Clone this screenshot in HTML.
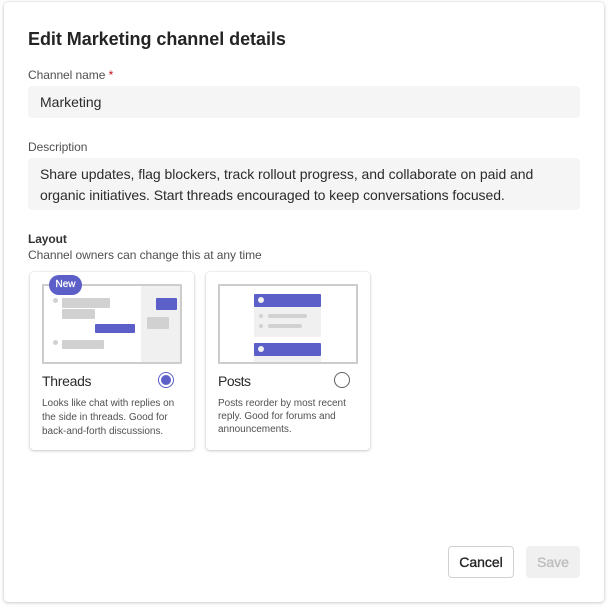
<!DOCTYPE html>
<html><head><meta charset="utf-8"><style>
html,body{margin:0;padding:0;background:#fff;width:608px;height:608px;overflow:hidden}
body{font-family:"Liberation Sans",sans-serif;color:#242424;position:relative}
.a{position:absolute;white-space:nowrap}
.dlg{position:absolute;left:4px;top:2px;width:600px;height:600px;background:#fff;border-radius:4px;box-shadow:0 0 2px rgba(0,0,0,.14),0 1px 4px rgba(0,0,0,.16)}
.inp{position:absolute;left:28px;width:552px;background:#f5f5f5;border-radius:4px}
.lbl{font-size:12px;line-height:16px;color:#505050;letter-spacing:-.06px}
.t{font-size:14px;line-height:20px;color:#2b2b2b}
.card{position:absolute;top:272px;width:164px;height:178px;background:#fff;border-radius:4px;box-shadow:0 0 2px rgba(0,0,0,.12),0 1px 3px rgba(0,0,0,.18)}
.pv{position:absolute;top:284px;width:136px;height:76px;border:2px solid #cccccc;border-radius:1px;background:#fff}
.g{position:absolute;background:#d1d1d1;border-radius:1px}
.b{position:absolute;background:#5b5fc7;border-radius:1px}
.d{position:absolute;border-radius:50%;background:#d1d1d1}
.s{font-size:10px;line-height:14px;color:#505050;letter-spacing:-.02px}
</style></head><body>
<div class="dlg"></div>
<div class="a" style="left:28px;top:28px;font-size:18px;line-height:22px;font-weight:700;color:#242424;letter-spacing:-.04px">Edit Marketing channel details</div>
<div class="a lbl" style="left:28px;top:67px">Channel name <span style="color:#c50f1f">*</span></div>
<div class="inp" style="top:86px;height:32px"></div>
<div class="a t" style="left:40px;top:92px">Marketing</div>
<div class="a lbl" style="left:28px;top:139px">Description</div>
<div class="inp" style="top:158px;height:52px"></div>
<div class="a t" style="left:40px;top:164px;letter-spacing:-.04px">Share updates, flag blockers, track rollout progress, and collaborate on paid and</div>
<div class="a t" style="left:40px;top:185px;letter-spacing:-.07px">organic initiatives. Start threads encouraged to keep conversations focused.</div>
<div class="a" style="left:28px;top:231px;font-size:12px;line-height:16px;font-weight:700;color:#333;letter-spacing:-.1px">Layout</div>
<div class="a lbl" style="left:28px;top:247px">Channel owners can change this at any time</div>

<div class="card" style="left:30px"></div>
<div class="pv" style="left:42px"></div>
<div class="a" style="left:141px;top:286px;width:39px;height:76px;background:#f0f0f0"></div>
<div class="d" style="left:53px;top:298px;width:5px;height:5px"></div>
<div class="g" style="left:62px;top:298px;width:48px;height:10px"></div>
<div class="g" style="left:62px;top:309px;width:33px;height:10px"></div>
<div class="b" style="left:95px;top:324px;width:40px;height:9px"></div>
<div class="d" style="left:53px;top:340px;width:5px;height:5px"></div>
<div class="g" style="left:62px;top:340px;width:42px;height:9px"></div>
<div class="b" style="left:156px;top:298px;width:21px;height:12px"></div>
<div class="g" style="left:147px;top:317px;width:22px;height:12px"></div>
<div class="a" style="left:49px;top:275px;width:33px;height:20px;border-radius:10px;background:#5b5fc7;color:#fff;font-size:10px;line-height:20px;text-align:center;-webkit-text-stroke:.25px #fff">New</div>
<div class="a t" style="left:42px;top:371px;letter-spacing:-.3px">Threads</div>
<div class="a" style="left:158px;top:372px;width:14px;height:14px;border:1px solid #5b5fc7;border-radius:50%"><div style="width:10px;height:10px;margin:2px;background:#5b5fc7;border-radius:50%"></div></div>
<div class="a s" style="left:42px;top:397px">Looks like chat with replies on</div>
<div class="a s" style="left:42px;top:411px">the side in threads. Good for</div>
<div class="a s" style="left:42px;top:425px">back-and-forth discussions.</div>

<div class="card" style="left:206px"></div>
<div class="pv" style="left:218px"></div>
<div class="a" style="left:254px;top:294px;width:67px;height:43px;background:#f0f0f0;border-radius:1px"></div>
<div class="b" style="left:254px;top:294px;width:67px;height:13px"></div>
<div class="a" style="left:258px;top:297px;width:6px;height:6px;border-radius:50%;background:#f0f0f0"></div>
<div class="d" style="left:259px;top:314px;width:4px;height:4px"></div>
<div class="g" style="left:268px;top:314px;width:39px;height:4px;border-radius:2px"></div>
<div class="d" style="left:259px;top:324px;width:4px;height:4px"></div>
<div class="g" style="left:268px;top:324px;width:34px;height:4px;border-radius:2px"></div>
<div class="a" style="left:254px;top:343px;width:67px;height:19px;background:#f0f0f0"></div>
<div class="b" style="left:254px;top:343px;width:67px;height:13px"></div>
<div class="a" style="left:258px;top:346px;width:6px;height:6px;border-radius:50%;background:#f0f0f0"></div>
<div class="a t" style="left:218px;top:371px;letter-spacing:-.5px">Posts</div>
<div class="a" style="left:334px;top:372px;width:14px;height:14px;border:1px solid #616161;border-radius:50%"></div>
<div class="a s" style="left:218px;top:397px">Posts reorder by most recent</div>
<div class="a s" style="left:218px;top:410px">reply. Good for forums and</div>
<div class="a s" style="left:218px;top:423px">announcements.</div>

<div class="a" style="left:448px;top:546px;width:64px;height:30px;border:1px solid #d1d1d1;border-radius:4px;background:#fff;text-align:center;font-size:14px;line-height:30px;color:#242424;-webkit-text-stroke:.35px #242424">Cancel</div>
<div class="a" style="left:526px;top:546px;width:54px;height:32px;border-radius:4px;background:#f0f0f0;text-align:center;font-size:14px;line-height:32px;color:#bdbdbd;-webkit-text-stroke:.35px #bdbdbd">Save</div>
</body></html>
